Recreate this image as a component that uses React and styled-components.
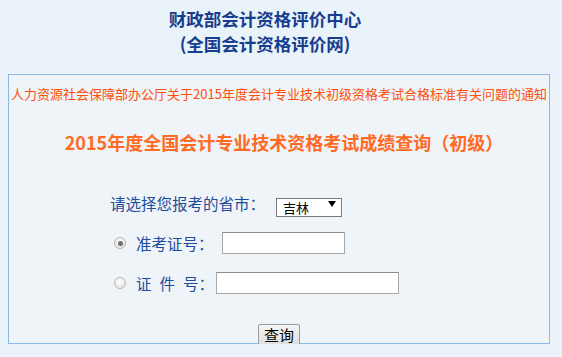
import styled, { createGlobalStyle } from "styled-components";

const GlobalStyle = createGlobalStyle`
  html, body {
    margin: 0;
    padding: 0;
    background: #ebf3fa;
    font-family: "Noto Sans CJK SC", "Microsoft YaHei", sans-serif;
  }
`;

export default function App() {
  return (
    <Page>
      <GlobalStyle />
      <Header>
        <HeadLine>财政部会计资格评价中心</HeadLine>
        <HeadLine>(全国会计资格评价网)</HeadLine>
      </Header>
      <Box>
        <Notice>人力资源社会保障部办公厅关于2015年度会计专业技术初级资格考试合格标准有关问题的通知</Notice>
        <QueryTitle>2015年度全国会计专业技术资格考试成绩查询（初级）</QueryTitle>
        <Form>
          <Row>
            <Label $width={166}>请选择您报考的省市：</Label>
            <SelectWrap>
              <Select defaultValue="吉林">
                <option>吉林</option>
              </Select>
              <Arrow viewBox="0 0 8 6">
                <path d="M0 0 L8 0 L4 6 Z" fill="#000" />
              </Arrow>
            </SelectWrap>
          </Row>
          <Row $indent>
            <Radio type="radio" name="kind" defaultChecked />
            <Label $width={96}>准考证号：</Label>
            <TextInput $width={123} />
          </Row>
          <Row $indent>
            <Radio type="radio" name="kind" />
            <Label $width={90}>
              <Spaced>证</Spaced>
              <Spaced>件</Spaced>
              号：
            </Label>
            <TextInput $width={183} />
          </Row>
        </Form>
        <ButtonRow>
          <Button type="button">查询</Button>
        </ButtonRow>
      </Box>
    </Page>
  );
}

const Page = styled.div`
  width: 562px;
  padding-top: 6px;
`;

const Header = styled.div`
  width: 530px;
  display: flex;
  flex-direction: column;
  align-items: center;
  margin-bottom: 18px;
`;

const HeadLine = styled.div`
  color: #173e8e;
  font-size: 17.5px;
  font-weight: 700;
  line-height: 25px;
`;

const Box = styled.div`
  margin-left: 8px;
  width: 540px;
  border: 1px solid #8cbbe6;
  background: #eff4f8;
  padding-top: 9px;
`;

const Notice = styled.div`
  color: #ff4e0a;
  font-size: 13px;
  line-height: 20px;
  text-align: center;
  white-space: nowrap;
`;

const QueryTitle = styled.div`
  margin-top: 26px;
  padding-left: 10px;
  color: #ff6a24;
  font-size: 18px;
  font-weight: 700;
  line-height: 24px;
  text-align: center;
`;

const Form = styled.div`
  margin-top: 37px;
  padding-left: 101px;
  display: flex;
  flex-direction: column;
  gap: 16px;
`;

const Row = styled.div`
  display: flex;
  align-items: center;
  height: 24px;
  padding-left: ${(p) => (p.$indent ? "4px" : "0")};
`;

const Label = styled.span`
  display: inline-block;
  box-sizing: border-box;
  width: ${(p) => p.$width}px;
  padding-left: ${(p) => (p.$width < 150 ? "10px" : "0")};
  color: #1d4c9c;
  font-size: 15.5px;
  line-height: 24px;
  white-space: nowrap;
`;

const Spaced = styled.span`
  margin-right: 8px;
`;

const SelectWrap = styled.div`
  position: relative;
  width: 66px;
  height: 19px;
`;

const Select = styled.select`
  appearance: none;
  width: 66px;
  height: 19px;
  box-sizing: border-box;
  border: 1px solid #7a7a7a;
  background: #fff;
  font-family: "Noto Sans CJK SC", sans-serif;
  font-size: 13px;
  line-height: 17px;
  padding: 0 0 0 6px;
  color: #000;
  border-radius: 0;
  outline: none;
`;

const Arrow = styled.svg`
  position: absolute;
  right: 6px;
  top: 7px;
  width: 8px;
  height: 6px;
  pointer-events: none;
`;

const Radio = styled.input`
  appearance: none;
  margin: 0;
  width: 12px;
  height: 12px;
  border-radius: 50%;
  border: 1px solid #b4b4b4;
  background: radial-gradient(circle at 50% 35%, #ffffff 0%, #e2e2e2 90%);
  box-sizing: border-box;
  position: relative;

  &:checked::after {
    content: "";
    position: absolute;
    left: 2.5px;
    top: 2.5px;
    width: 5px;
    height: 5px;
    border-radius: 50%;
    background: #6f6f6f;
  }
`;

const TextInput = styled.input`
  width: ${(p) => p.$width}px;
  height: 22px;
  box-sizing: border-box;
  border: 1px solid #a8a8a8;
  border-top-color: #8c8c8c;
  background: #fff;
  outline: none;
  margin: 0;
`;

const ButtonRow = styled.div`
  margin-top: 29px;
  margin-bottom: -3px;
  display: flex;
  justify-content: center;
`;

const Button = styled.button`
  width: 42px;
  height: 22px;
  padding: 0;
  border: 1px solid #9a9a9a;
  border-radius: 2px;
  background: linear-gradient(#f6f6f6, #dedede);
  color: #000;
  font-family: "Noto Sans CJK SC", sans-serif;
  font-size: 15px;
  line-height: 20px;
`;
